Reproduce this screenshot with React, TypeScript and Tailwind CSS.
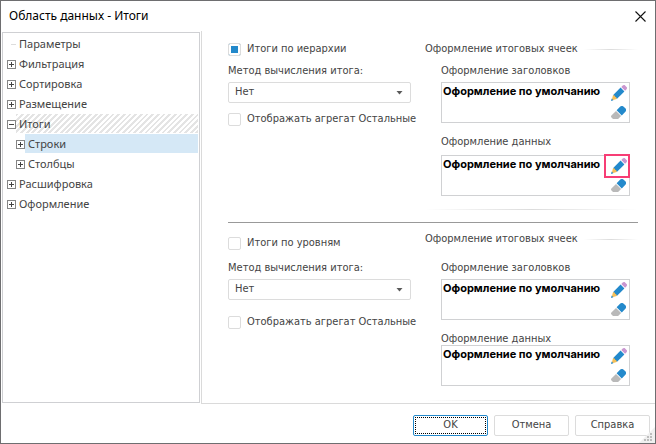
import React from 'react';

const PencilIcon = () => (
  <svg width="16" height="16" viewBox="0 0 16 16">
    <path d="M2 10.2 9.6 2.6 13.4 6.4 5.8 14z" fill="#2389cb" />
    <path d="M2 10.2 3.6 10.6 4.2 11.8 5.4 12.4 5.8 14 1.2 15.2 0.8 14.8z" fill="#f5bf58" />
    <path d="M0 16 0.7 13.6 2.4 15.3z" fill="#2389cb" />
    <path d="M10.3 1.9 11.7.5Q12.2 0 12.9 0H13.6L16 2.4V3.1Q16 3.8 15.5 4.3L14.1 5.7z" fill="#c996d0" />
  </svg>
);

const EraserIcon = () => (
  <svg width="16" height="13" viewBox="0 0 16 13">
    <path d="M5.6 4.2 9.3.5Q9.8 0 10.5 0H11.5Q12 0 12.4.4L14.6 2.6Q15 3 15 3.5V4.6Q15 5.2 14.6 5.6L10.8 9.4z" fill="#2389cb" />
    <path d="M5 4.9 10.1 10 7.6 12.5Q7.1 13 6.4 13H2.6Q2 13 1.5 12.5L.5 11.5Q0 11 0 10.4V10.2Q0 9.8.4 9.4z" fill="#b9b9b9" />
  </svg>
);

type ExpanderProps = { open?: boolean; label: string };

const Expander = ({ open, label }: ExpanderProps) => (
  <button type="button" aria-label={label} aria-expanded={!!open} className="size-[9px] shrink-0">
    <svg width="9" height="9" viewBox="0 0 9 9" shapeRendering="crispEdges">
      <rect width="9" height="9" fill="#858585" />
      <rect x="1" y="1" width="7" height="7" fill="#fff" />
      <rect x="2" y="4" width="5" height="1" fill="#444" />
      {!open && <rect x="4" y="2" width="1" height="5" fill="#444" />}
    </svg>
  </button>
);

const TreeItem = ({ label }: { label: string }) => (
  <li role="treeitem" className="flex h-5 items-center pl-1">
    <Expander label={label} />
    <span className="pl-[3px]">{label}</span>
  </li>
);

const Tree = () => (
  <ul role="tree" className="w-[198px] shrink-0 border border-[#cfd0d3] py-px pr-px font-['Noto_Sans',sans-serif] text-[11px] text-[#444]">
    <li role="treeitem" className="flex h-5 items-center pl-2">
      <span className="h-px w-[5px] bg-[#ddd]" />
      <span className="pl-[3px]">Параметры</span>
    </li>
    <TreeItem label="Фильтрация" />
    <TreeItem label="Сортировка" />
    <TreeItem label="Размещение" />
    <li role="treeitem" aria-expanded="true">
      <div className="flex h-5 items-center pl-1">
        <Expander open label="Итоги" />
        <span className="h-[19px] flex-1 self-start bg-[repeating-linear-gradient(135deg,#e4e4e4_0_2px,#fff_2px_4px)] pl-[3px] leading-[19px]">Итоги</span>
      </div>
      <ul role="group">
        <li role="treeitem" aria-selected="true" className="flex h-5 items-center pl-[13px]">
          <Expander label="Строки" />
          <span className="h-[19px] flex-1 self-start bg-[#d5e8f6] pl-[3px] leading-[19px]">Строки</span>
        </li>
        <li role="treeitem" className="flex h-5 items-center pl-[13px]">
          <Expander label="Столбцы" />
          <span className="pl-[3px]">Столбцы</span>
        </li>
      </ul>
    </li>
    <TreeItem label="Расшифровка" />
    <TreeItem label="Оформление" />
  </ul>
);

const Check = ({ label, checked }: { label: string; checked?: boolean }) => (
  <label className="flex h-5 items-center gap-[6px] whitespace-nowrap">
    <input
      type="checkbox"
      defaultChecked={checked}
      className="size-[13px] shrink-0 appearance-none rounded-xs border border-[#dcdcdc] bg-white shadow-[inset_0_0_0_2px_white] checked:bg-[#2389cb]"
    />
    {label}
  </label>
);

const Method = ({ id }: { id: string }) => (
  <div>
    <label htmlFor={id} className="block h-[22px] leading-[22px]">Метод вычисления итога:</label>
    <div className="relative w-[183px]">
      <select id={id} className="block h-[21px] w-full appearance-none rounded-xs border border-[#dcdcdc] bg-white pl-[6px]">
        <option>Нет</option>
      </select>
      <svg className="pointer-events-none absolute top-[9px] right-2" width="7" height="4" viewBox="0 0 7 4">
        <path d="M.5 0H6.5L3.5 3.5z" fill="#5a5a5a" />
      </svg>
    </div>
  </div>
);

const Preview = ({ title, active }: { title: string; active?: boolean }) => (
  <div className="relative flex h-[41px] justify-between border border-[#d0d1d3] pr-[2px] pl-[1px]">
    <span className="font-['Inter',sans-serif] text-[11px] leading-4 font-bold whitespace-nowrap text-black">Оформление по умолчанию</span>
    <div className="flex flex-col items-center gap-[5px] pt-[2px]">
      <button type="button" aria-label={'Изменить: ' + title}><PencilIcon /></button>
      <button type="button" aria-label={'Очистить: ' + title}><EraserIcon /></button>
    </div>
    {active && <span className="pointer-events-none absolute -top-[2px] -right-px h-6 w-[26px] border-2 border-[#f73d75]" />}
  </div>
);

const GroupTitle = () => (
  <div className="flex h-5 items-center gap-[6px] whitespace-nowrap">
    Оформление итоговых ячеек
    <span className="h-px flex-1 bg-linear-to-r from-white via-[#dcdcdc] to-white" />
  </div>
);

const Fade = () => <div className="-ml-4 h-px bg-linear-to-r from-white via-[#dcdcdc] to-white" />;

export default function App() {
  return (
    <div className="flex min-h-screen flex-col border border-[#6e6e70] bg-white font-['DejaVu_Sans_Condensed','DejaVu_Sans',sans-serif] text-[11px] text-[#444]">
      <header className="flex h-[30px] items-center justify-between pr-[9px] pl-2 text-black">
        <h1 className="font-['Noto_Sans',sans-serif] text-xs">Область данных - Итоги</h1>
        <button type="button" aria-label="Закрыть">
          <svg width="11" height="11" viewBox="0 0 11 11">
            <path d="M.5.5 10.5 10.5M10.5.5.5 10.5" stroke="#111" strokeWidth="1.1" fill="none" />
          </svg>
        </button>
      </header>

      <div className="flex flex-1 gap-px pl-px">
        <div className="flex pt-px pb-px">
          <Tree />
        </div>
        <main className="min-w-0 flex-1 border-b border-l border-[#dadada] pr-[17px] pl-[26px]">
          <section className="flex h-[191px] pt-2">
            <div className="w-[197px] shrink-0">
              <Check label="Итоги по иерархии" checked />
              <div className="pt-[1px]"><Method id="method-hierarchy" /></div>
              <div className="pt-[6px]"><Check label="Отображать агрегат Остальные" /></div>
            </div>
            <div className="min-w-0 flex-1">
              <GroupTitle />
              <div className="pt-[1px] pr-2 pl-4">
                <h3 className="h-[22px] leading-[22px]">Оформление заголовков</h3>
                <Preview title="заголовки" />
                <h3 className="mt-[9px] mb-[3px] h-5 leading-5">Оформление данных</h3>
                <Preview title="данные" active />
              </div>
              <div className="pt-[13px] pl-4"><Fade /></div>
            </div>
          </section>

          <section className="flex border-t border-[#999] pt-[10px]">
            <div className="w-[197px] shrink-0">
              <Check label="Итоги по уровням" />
              <div className="pt-1"><Method id="method-levels" /></div>
              <div className="pt-3"><Check label="Отображать агрегат Остальные" /></div>
            </div>
            <div className="min-w-0 flex-1">
              <div className="-mt-1"><GroupTitle /></div>
              <div className="pt-2 pr-2 pl-4">
                <h3 className="h-[22px] leading-[22px]">Оформление заголовков</h3>
                <Preview title="заголовки уровней" />
                <h3 className="mt-[13px] h-3 leading-3">Оформление данных</h3>
                <Preview title="данные уровней" />
              </div>
              <div className="pt-[14px] pb-[2px] pl-4"><Fade /></div>
            </div>
          </section>
        </main>
      </div>

      <footer className="relative flex justify-end gap-[6px] pt-[11px] pr-[5px] pb-[7px]">
        <button type="button" className="h-[21px] w-[75px] rounded-xs border border-[#2389cb] p-px">
          <span className="flex h-full items-center justify-center border border-dotted border-black">OK</span>
        </button>
        <button type="button" className="h-[21px] w-[75px] rounded-xs border border-[#dcdcdc]">Отмена</button>
        <button type="button" className="h-[21px] w-[75px] rounded-xs border border-[#dcdcdc]">Справка</button>
        <svg className="absolute right-0 bottom-0" width="16" height="16" viewBox="0 0 16 16">
          <path d="M16 0V16H0z" fill="#f0f0f0" />
          <path d="M11 6h2v2h-2zM8 9h2v2H8zM11 9h2v2h-2zM5 12h2v2H5zM8 12h2v2H8zM11 12h2v2h-2z" fill="#bdbdbd" />
        </svg>
      </footer>
    </div>
  );
}
